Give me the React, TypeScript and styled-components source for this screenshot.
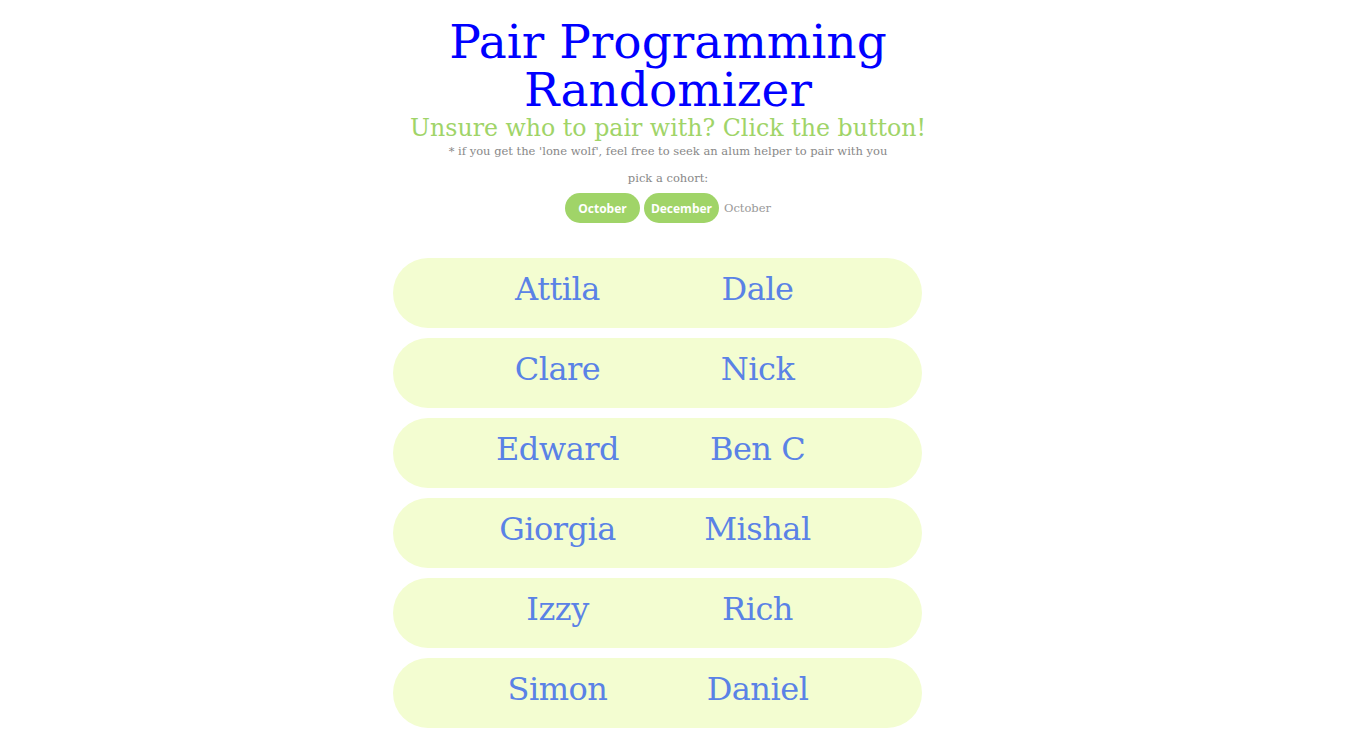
import React from "react";
import styled, { createGlobalStyle } from "styled-components";

const GlobalStyle = createGlobalStyle`
  html, body {
    margin: 0;
    padding: 0;
    background: #ffffff;
  }
  body {
    font-family: "DejaVu Serif", serif;
  }
`;

const Page = styled.div`
  display: flex;
  flex-direction: column;
  align-items: center;
  padding: 18px 23px 0 0;
`;

const Title = styled.h1`
  margin: 0;
  font-family: "DejaVu Serif", serif;
  font-weight: normal;
  font-size: 47px;
  line-height: 48px;
  color: #0000ff;
  text-align: center;
  width: 470px;
`;

const Subtitle = styled.h2`
  margin: 0;
  font-family: "DejaVu Serif", serif;
  font-weight: normal;
  font-size: 23.7px;
  line-height: 28px;
  color: #a0d468;
  text-align: center;
`;

const Note = styled.p`
  margin: 0;
  font-size: 11.5px;
  line-height: 18px;
  color: #888888;
  text-align: center;
`;

const CohortLabel = styled.p`
  margin: 10px 0 0;
  font-size: 11.5px;
  line-height: 16px;
  color: #888888;
  text-align: center;
`;

const CohortBar = styled.div`
  display: flex;
  align-items: center;
  gap: 4px;
  margin-top: 7px;
`;

const CohortButton = styled.button`
  width: 75px;
  height: 30px;
  border: none;
  border-radius: 15px;
  background: #a0d468;
  color: #ffffff;
  font-family: "Open Sans", sans-serif;
  font-weight: 700;
  font-size: 12px;
  padding: 0;
  cursor: pointer;
`;

const CurrentCohort = styled.span`
  margin-left: 1px;
  font-size: 11.5px;
  color: #999999;
`;

const PairList = styled.div`
  display: flex;
  flex-direction: column;
  gap: 10px;
  width: 529px;
  margin: 35px 21px 0 0;
`;

const PairRow = styled.div`
  height: 70px;
  border-radius: 35px;
  background: #f3fdd1;
  display: flex;
  justify-content: center;
  align-items: center;
  padding-bottom: 8px;
  box-sizing: border-box;
`;

const Name = styled.span`
  width: 200px;
  text-align: center;
  font-size: 32px;
  color: #5a82e6;
  letter-spacing: -0.5px;
`;

const pairs: [string, string][] = [
  ["Attila", "Dale"],
  ["Clare", "Nick"],
  ["Edward", "Ben C"],
  ["Giorgia", "Mishal"],
  ["Izzy", "Rich"],
  ["Simon", "Daniel"],
];

export default function App() {
  return (
    <>
      <GlobalStyle />
      <Page>
        <Title>Pair Programming Randomizer</Title>
        <Subtitle>Unsure who to pair with? Click the button!</Subtitle>
        <Note>* if you get the 'lone wolf', feel free to seek an alum helper to pair with you</Note>
        <CohortLabel>pick a cohort:</CohortLabel>
        <CohortBar>
          <CohortButton>October</CohortButton>
          <CohortButton>December</CohortButton>
          <CurrentCohort>October</CurrentCohort>
        </CohortBar>
        <PairList>
          {pairs.map(([a, b]) => (
            <PairRow key={a}>
              <Name>{a}</Name>
              <Name>{b}</Name>
            </PairRow>
          ))}
        </PairList>
      </Page>
    </>
  );
}
